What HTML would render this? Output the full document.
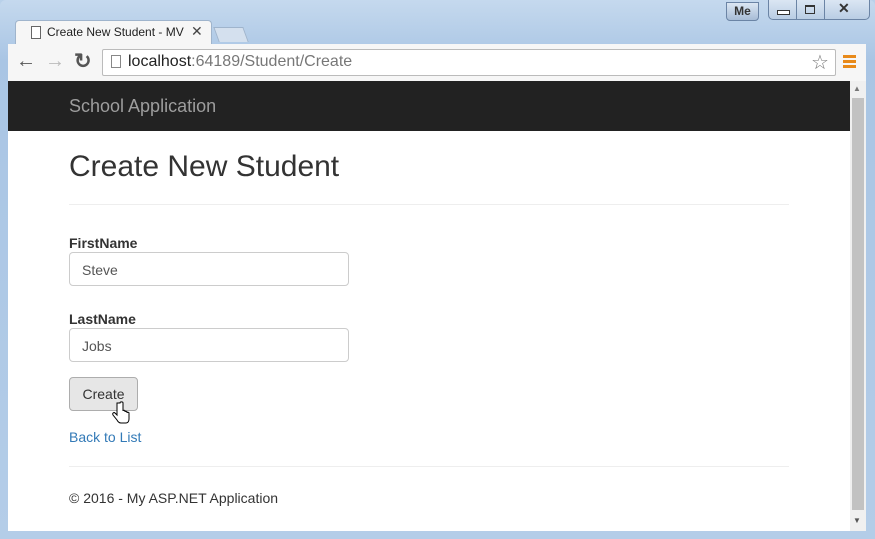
<!DOCTYPE html><html><head><style>
body{margin:0;width:875px;height:539px;overflow:hidden;background:#b9d1ea;font-family:"Liberation Sans",sans-serif;position:relative}
.abs{position:absolute}
</style></head><body>
<div class="abs" style="left:0;top:0;width:875px;height:539px;background:linear-gradient(#c5d9ee,#a9c5e4 60px,#b4cde8);border-radius:6px 6px 0 0"></div>
<div class="abs" style="left:726px;top:2px;width:31px;height:17px;border:1px solid #6b84a5;border-radius:0 0 4px 4px;background:linear-gradient(#dbe6f3,#a7bcd6);font-size:12px;font-weight:bold;color:#333;text-align:center;line-height:17px">Me</div>
<div class="abs" style="left:768px;top:0;width:100px;height:19px;border:1px solid #6b84a5;border-top:none;border-radius:0 0 5px 5px;background:linear-gradient(#dbe6f3,#b9cde4)"></div>
<div class="abs" style="left:796px;top:0;width:1px;height:19px;background:#6b84a5"></div>
<div class="abs" style="left:824px;top:0;width:1px;height:19px;background:#6b84a5"></div>
<div class="abs" style="left:777px;top:10px;width:11px;height:3px;border:1px solid #333;background:#fff"></div>
<div class="abs" style="left:805px;top:5px;width:8px;height:6px;border:1px solid #333;border-top-width:2px"></div>
<div class="abs" style="left:838px;top:0;font-size:14px;font-weight:bold;color:#333">✕</div>
<div class="abs" style="left:216px;top:27px;width:28px;height:14px;background:#d4e0ee;border:1px solid #9fb4cc;transform:skewX(20deg);border-bottom:none"></div>
<div class="abs" style="left:15px;top:20px;width:195px;height:25px;background:#f6f6f6;border:1px solid #9fb4cc;border-bottom:none;border-radius:4px 4px 0 0"></div>
<div class="abs" style="left:31px;top:26px;width:8px;height:11px;border:1px solid #666;background:#fff"></div>
<div class="abs" style="left:47px;top:25px;font-size:12px;color:#222;width:138px;overflow:hidden;white-space:nowrap">Create New Student - MV</div>
<div class="abs" style="left:191px;top:23px;font-size:14px;color:#444">✕</div>
<div class="abs" style="left:8px;top:44px;width:858px;height:37px;background:#f6f6f6"></div>
<div class="abs" style="left:16px;top:50px;font-size:20px;color:#555;font-weight:bold">←</div>
<div class="abs" style="left:45px;top:50px;font-size:20px;color:#bbb;font-weight:bold">→</div>
<div class="abs" style="left:74px;top:49px;font-size:21px;color:#555;font-weight:bold">↻</div>
<div class="abs" style="left:102px;top:49px;width:732px;height:25px;background:#fff;border:1px solid #bbb;border-radius:2px"></div>
<div class="abs" style="left:111px;top:55px;width:8px;height:11px;border:1px solid #888"></div>
<div class="abs" style="left:128px;top:53px;font-size:16px;color:#222">localhost<span style="color:#777">:64189/Student/Create</span></div>
<div class="abs" style="left:811px;top:50px;font-size:20px;color:#777">☆</div>
<div class="abs" style="left:843px;top:55px;width:13px;height:3px;background:#e88a1a;box-shadow:0 5px #e88a1a,0 10px #e88a1a"></div>
<div class="abs" style="left:8px;top:81px;width:842px;height:450px;background:#fff"></div>
<div class="abs" style="left:850px;top:81px;width:16px;height:450px;background:#f0f0f0"></div>
<div class="abs" style="left:852px;top:98px;width:12px;height:412px;background:#c2c2c2"></div>
<div class="abs" style="left:853px;top:84px;font-size:8px;color:#777">▲</div>
<div class="abs" style="left:853px;top:516px;font-size:8px;color:#555">▼</div>
<div class="abs" style="left:8px;top:81px;width:842px;height:50px;background:#222"></div>
<div class="abs" style="left:69px;top:96px;font-size:18px;color:#9d9d9d">School Application</div>
<div class="abs" style="left:69px;top:150px;font-size:30px;color:#333">Create New Student</div>
<div class="abs" style="left:69px;top:204px;width:720px;height:1px;background:#eee"></div>
<div class="abs" style="left:69px;top:235px;font-size:14px;font-weight:bold;color:#333">FirstName</div>
<div class="abs" style="left:69px;top:252px;width:278px;height:32px;border:1px solid #ccc;border-radius:4px"></div>
<div class="abs" style="left:82px;top:262px;font-size:14px;color:#555">Steve</div>
<div class="abs" style="left:69px;top:311px;font-size:14px;font-weight:bold;color:#333">LastName</div>
<div class="abs" style="left:69px;top:328px;width:278px;height:32px;border:1px solid #ccc;border-radius:4px"></div>
<div class="abs" style="left:82px;top:338px;font-size:14px;color:#555">Jobs</div>
<div class="abs" style="left:69px;top:377px;width:67px;height:32px;border:1px solid #adadad;border-radius:4px;background:#e6e6e6;font-size:14px;color:#333;text-align:center;line-height:32px">Create</div>
<svg class="abs" style="left:112px;top:401px" width="20" height="24" viewBox="0 0 20 24"><path d="M5 2v12l-2-2c-1-1-3 0-2 2l4 5c1 2 2 3 4 3h5c2 0 3-2 3-4v-6c0-1-2-1-2 0v-1c0-1-2-1-2 0v-1c0-1-2-1-2 0V2c0-1.5-3-1.5-3 0z" fill="#fff" stroke="#000" stroke-width="1"/></svg>
<div class="abs" style="left:69px;top:429px;font-size:14px;color:#337ab7">Back to List</div>
<div class="abs" style="left:69px;top:466px;width:720px;height:1px;background:#eee"></div>
<div class="abs" style="left:69px;top:490px;font-size:14px;color:#333">© 2016 - My ASP.NET Application</div>
</body></html>
